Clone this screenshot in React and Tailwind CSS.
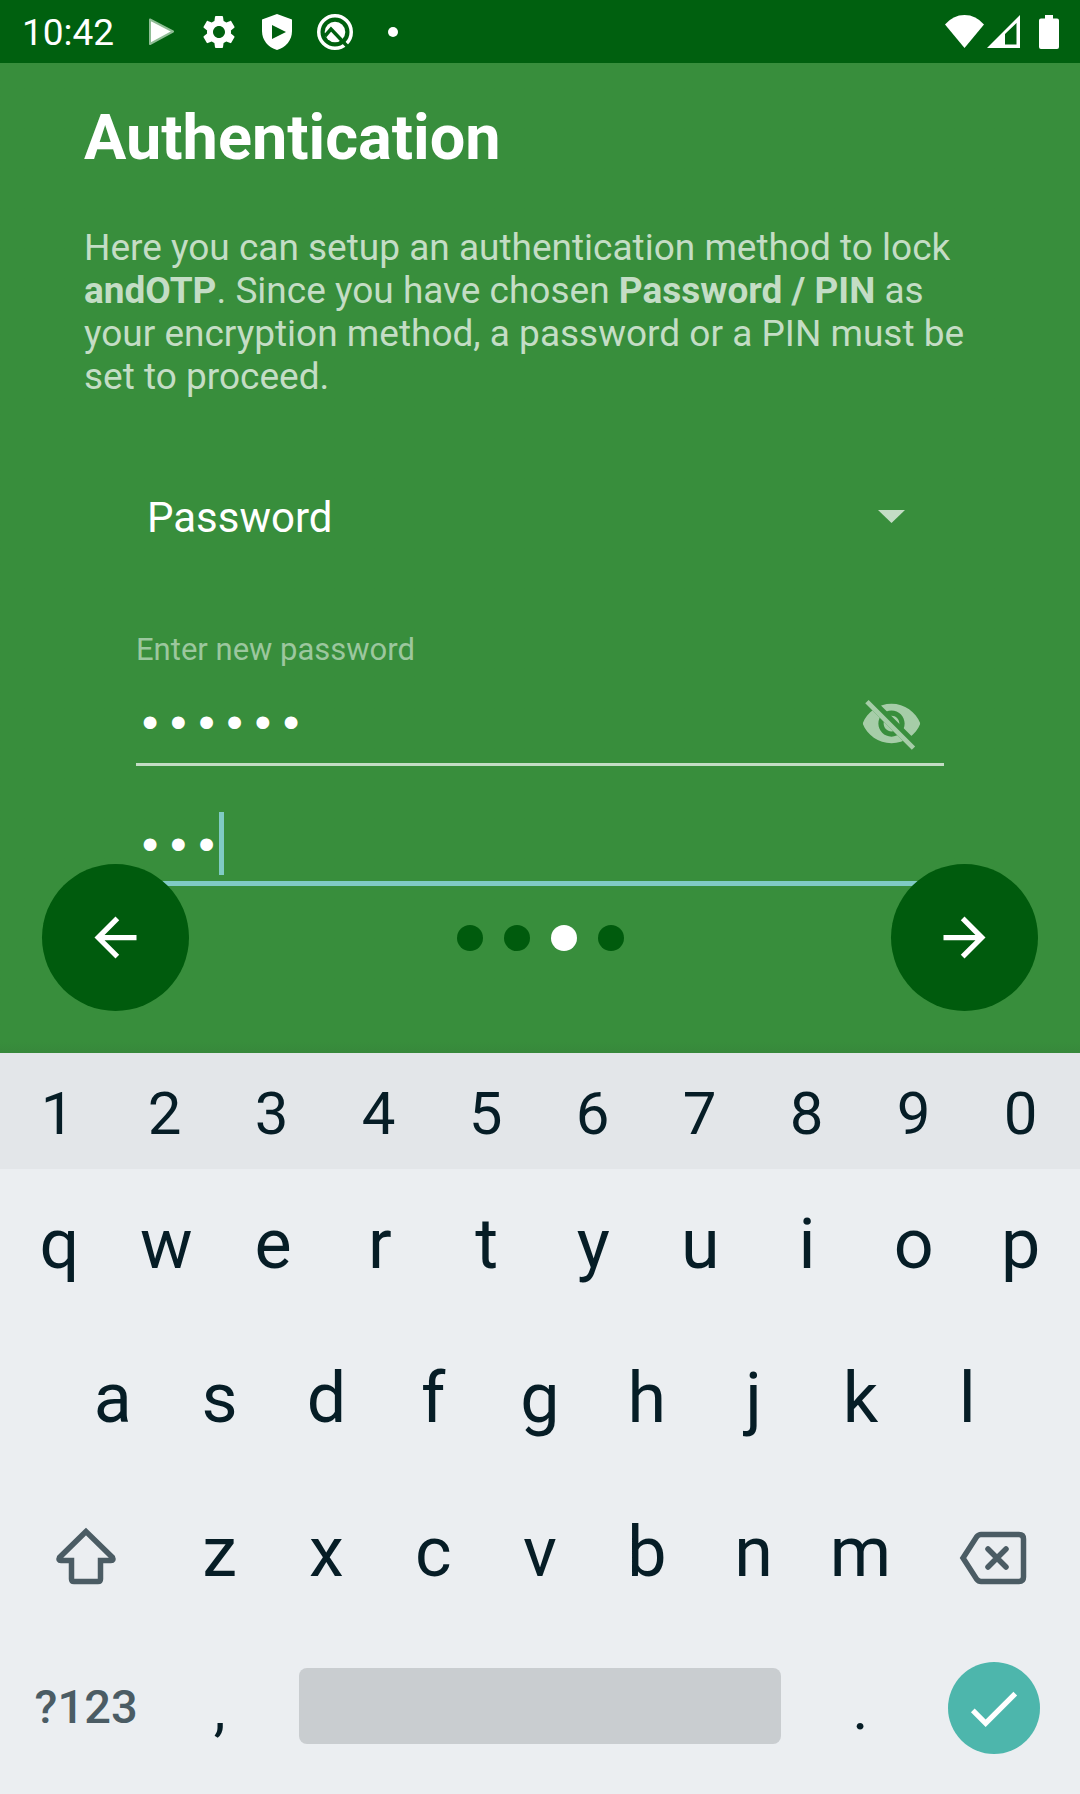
import React from "react";

const NUMBERS = "1234567890".split("");
const TOP_ROW = "qwertyuiop".split("");
const HOME_ROW = "asdfghjkl".split("");
const BOTTOM_ROW = "zxcvbnm".split("");
const STEPS = ["Welcome", "Encryption", "Authentication", "Finish"];

function StatusBar() {
  return (
    <header className="flex h-[63px] items-center justify-between bg-[#00600f] pl-[22px] pr-[21px] text-white">
      <div className="flex items-center">
        <time className="pt-0.5 text-[37px] leading-[43px]">10:42</time>
        <svg className="ml-[35px] h-[28px] w-[25px]" viewBox="0 0 25 28" aria-hidden="true">
          <path d="M1 1.5 24 13.5 1 26Z" fill="#fff" stroke="#8fbd95" strokeWidth="2" strokeLinejoin="round" />
        </svg>
        <svg className="ml-[25px] h-[40px] w-[40px]" viewBox="0 0 24 24" fill="currentColor" aria-hidden="true">
          <path d="M19.14 12.94c.04-.3.06-.61.06-.94 0-.32-.02-.64-.07-.94l2.03-1.58c.18-.14.23-.41.12-.61l-1.92-3.32c-.12-.22-.37-.29-.59-.22l-2.39.96c-.5-.38-1.03-.7-1.62-.94l-.36-2.54c-.04-.24-.24-.41-.48-.41h-3.84c-.24 0-.43.17-.47.41l-.36 2.54c-.59.24-1.13.57-1.62.94l-2.39-.96c-.22-.08-.47 0-.59.22L2.74 8.87c-.12.21-.08.47.12.61l2.03 1.58c-.05.3-.09.63-.09.94s.02.64.07.94l-2.03 1.58c-.18.14-.23.41-.12.61l1.92 3.32c.12.22.37.29.59.22l2.39-.96c.5.38 1.03.7 1.62.94l.36 2.54c.05.24.24.41.48.41h3.84c.24 0 .44-.17.47-.41l.36-2.54c.59-.24 1.13-.56 1.62-.94l2.39.96c.22.08.47 0 .59-.22l1.92-3.32c.12-.22.07-.47-.12-.61l-2.01-1.58zM12 15.6c-1.98 0-3.6-1.62-3.6-3.6s1.62-3.6 3.6-3.6 3.6 1.62 3.6 3.6-1.62 3.6-3.6 3.6z" />
        </svg>
        <svg className="ml-[23px] h-[36px] w-[30px]" viewBox="0 0 30 36" aria-hidden="true">
          <path d="M15 0 30 5.500V17C30 26 24 33.500 15 36 6 33.500 0 26 0 17V5.500Z" fill="#fff" />
          <path d="M10 11 24 18 10 25Z" fill="#00600f" />
        </svg>
        <svg className="ml-[25px] h-[36px] w-[36px]" viewBox="0 0 36 36" fill="none" aria-hidden="true">
          <circle cx="18" cy="18" r="16.250" stroke="#fff" strokeWidth="3.500" />
          <circle cx="18" cy="18" r="10.300" fill="#fff" />
          <path d="M8 22 14 15 31 33" stroke="#00600f" strokeWidth="3.500" />
        </svg>
        <span className="ml-[35px] size-[10px] rounded-full bg-white" />
      </div>
      <div className="flex items-center">
        <svg className="h-[34px] w-[39px]" viewBox="0 0 39 34" fill="currentColor" aria-hidden="true">
          <path d="M0 9.500Q8 0 19.500 0T39 9.500L19.500 33Z" />
        </svg>
        <svg className="ml-[3px] h-[34px] w-[33px]" viewBox="0 0 33 34" fill="currentColor" aria-hidden="true">
          <path fillRule="evenodd" d="M33 0V33H0ZM29.500 8 18 19V29.500H29.500Z" />
        </svg>
        <svg className="ml-[19px] h-[34px] w-[20px]" viewBox="0 0 20 34" fill="currentColor" aria-hidden="true">
          <path d="M6 0h8v3.500h4a2 2 0 0 1 2 2V32a2 2 0 0 1-2 2H2a2 2 0 0 1-2-2V5.500a2 2 0 0 1 2-2h4Z" />
        </svg>
      </div>
    </header>
  );
}

function PasswordForm() {
  return (
    <form className="px-[52px]" onSubmit={(e) => e.preventDefault()}>
      <div className="relative mt-20">
        <select
          aria-label="Authentication method"
          className="h-[78px] w-full appearance-none bg-transparent pl-[11px] text-[42px] text-white outline-none"
          defaultValue="Password"
        >
          <option>Password</option>
          <option>PIN</option>
        </select>
        <svg className="pointer-events-none absolute right-[39px] top-8 h-[13px] w-[27px]" viewBox="0 0 27 13" aria-hidden="true">
          <path d="M0 0H27L13.500 13Z" fill="#c4ddc5" />
        </svg>
      </div>
      <label htmlFor="new-password" className="mt-[74px] block text-[31px] leading-10 text-[#9cc79e]">
        Enter new password
      </label>
      <div className="mt-[13px] flex items-center border-b-[3px] border-[#c4ddc5] pr-[21px]">
        <input
          id="new-password"
          type="password"
          defaultValue="secret"
          className="h-20 min-w-0 flex-1 bg-transparent pt-1 font-['Liberation_Mono',monospace] text-[47px] text-white outline-none"
        />
        <button type="button" aria-label="Show password" className="size-[63px] text-[#a6cda8]">
          <svg viewBox="0 0 24 24" className="size-full" aria-hidden="true">
            <clipPath id="strike">
              <path d="M2 4.270 19.730 22 22.270 19.460 4.540 1.730V1H23V23H1V4.270Z" />
            </clipPath>
            <path
              clipPath="url(#strike)"
              fill="currentColor"
              d="M12 4.500C7 4.500 2.730 7.610 1 12c1.730 4.390 6 7.500 11 7.500s9.270-3.110 11-7.500c-1.730-4.390-6-7.500-11-7.500zM12 17c-2.760 0-5-2.240-5-5s2.240-5 5-5 5 2.240 5 5-2.240 5-5 5zM12 9c-1.660 0-3 1.340-3 3s1.340 3 3 3 3-1.340 3-3-1.340-3-3-3z"
            />
            <path d="M2.640 3.640 20.370 21.370" stroke="currentColor" strokeWidth="1.800" />
          </svg>
        </button>
      </div>
      <div className="relative mt-[43px] border-b-[5px] border-[#80cbc4]">
        <input
          type="password"
          aria-label="Confirm password"
          defaultValue="sec"
          className="block h-[72px] w-full bg-transparent pt-1 font-['Liberation_Mono',monospace] text-[47px] text-white outline-none"
        />
        <span className="absolute left-[83px] top-[3px] h-[63px] w-[5px] bg-[#80cbc4]" />
      </div>
    </form>
  );
}

function StepNav() {
  const fab = "grid size-[147px] place-items-center rounded-full bg-[#005b0d] text-white";
  return (
    <nav className="absolute inset-x-[42px] bottom-[42px] flex items-center justify-between">
      <button type="button" aria-label="Back" className={fab}>
        <svg viewBox="0 0 24 24" className="size-[63px]" fill="currentColor" aria-hidden="true">
          <path d="M20 11H7.830l5.590-5.590L12 4l-8 8 8 8 1.410-1.410L7.830 13H20v-2z" />
        </svg>
      </button>
      <ol className="flex gap-[21px]">
        {STEPS.map((step, i) => (
          <li key={step} aria-label={step} className={i === 2 ? "size-[26px] rounded-full bg-white" : "size-[26px] rounded-full bg-[#005b0d]"} />
        ))}
      </ol>
      <button type="button" aria-label="Next" className={fab}>
        <svg viewBox="0 0 24 24" className="size-[63px]" fill="currentColor" aria-hidden="true">
          <path d="M12 4l-1.410 1.410L16.170 11H4v2h12.170l-5.580 5.590L12 20l8-8z" />
        </svg>
      </button>
    </nav>
  );
}

function Key({ children, className = "col-span-2 text-[70px]", label }) {
  return (
    <button type="button" aria-label={label} className={"flex items-center justify-center leading-none " + className}>
      {children}
    </button>
  );
}

function Keyboard() {
  const row = "grid h-[154px] grid-cols-[repeat(20,minmax(0,1fr))] px-1.5 pb-1";
  return (
    <section aria-label="Keyboard" className="bg-[#ebeef1] pb-[9px] text-[#061d26]">
      <div className="grid h-[116px] grid-cols-10 bg-[#e3e6e9] pl-1 pr-1.5 pt-1.5">
        {NUMBERS.map((k) => (
          <Key key={k} className="text-[60px]">{k}</Key>
        ))}
      </div>
      <div className={row}>
        {TOP_ROW.map((k) => <Key key={k}>{k}</Key>)}
      </div>
      <div className={row}>
        <span />
        {HOME_ROW.map((k) => <Key key={k}>{k}</Key>)}
      </div>
      <div className={row}>
        <Key label="Shift" className="col-span-3 pt-2 text-[#4b5c64]">
          <svg className="h-[58px] w-[62px]" viewBox="0 0 62 58" fill="none" stroke="currentColor" strokeWidth="5.500" aria-hidden="true">
            <path d="M31 4.500 4.500 30.500Q3 33.500 6 33.500H16.500V52Q16.500 54.500 19 54.500H43Q45.500 54.500 45.500 52V33.500H56Q59 33.500 57.500 30.500Z" />
          </svg>
        </Key>
        {BOTTOM_ROW.map((k) => <Key key={k}>{k}</Key>)}
        <Key label="Backspace" className="col-span-3 pr-0.5 pt-3 text-[#4b5c64]">
          <svg className="h-[54px] w-[68px]" viewBox="0 0 68 54" fill="none" stroke="currentColor" strokeWidth="5.500" aria-hidden="true">
            <path d="M4 27 17.500 6Q19.500 3.500 22 3.500H60Q64.500 3.500 64.500 8V46Q64.500 50.500 60 50.500H22Q19.500 50.500 17.500 48Z" />
            <path d="M29 18 47 36M47 18 29 36" strokeLinecap="round" />
          </svg>
        </Key>
      </div>
      <div className={row}>
        <Key className="col-span-3 text-[47px] font-medium text-[#4b5c64]">?123</Key>
        <Key className="col-span-2 pt-1.5 text-[60px]">,</Key>
        <Key label="Space" className="col-span-10 mx-[26px] h-[76px] self-center rounded-lg bg-[#c9cdd0]" />
        <Key className="col-span-2 pt-1.5 text-[60px]">.</Key>
        <Key label="Done" className="col-span-3 pt-1">
          <span className="grid size-[92px] place-items-center rounded-full bg-[#4db6ac] text-white">
            <svg viewBox="0 0 24 24" className="size-[63px]" fill="currentColor" aria-hidden="true">
              <path d="M9 16.170L4.830 12l-1.420 1.410L9 19 21 7l-1.410-1.410z" />
            </svg>
          </span>
        </Key>
      </div>
    </section>
  );
}

export default function App() {
  return (
    <div className="flex min-h-screen flex-col bg-[#388e3c] font-['Roboto',sans-serif]">
      <StatusBar />
      <main className="relative flex-1 bg-linear-to-t from-[#37883b] to-[#388e3c] to-[12px] px-[84px] pt-[38px]">
        <h1 className="text-[63px] font-bold leading-[74px] text-white">Authentication</h1>
        <p className="mt-[51px] text-[37px] leading-[43px] text-[#c4ddc5]">
          Here you can setup an authentication method to lock <b>andOTP</b>. Since you have chosen <b>Password / PIN</b> as
          your encryption method, a password or a PIN must be set to proceed.
        </p>
        <PasswordForm />
        <StepNav />
      </main>
      <Keyboard />
    </div>
  );
}
